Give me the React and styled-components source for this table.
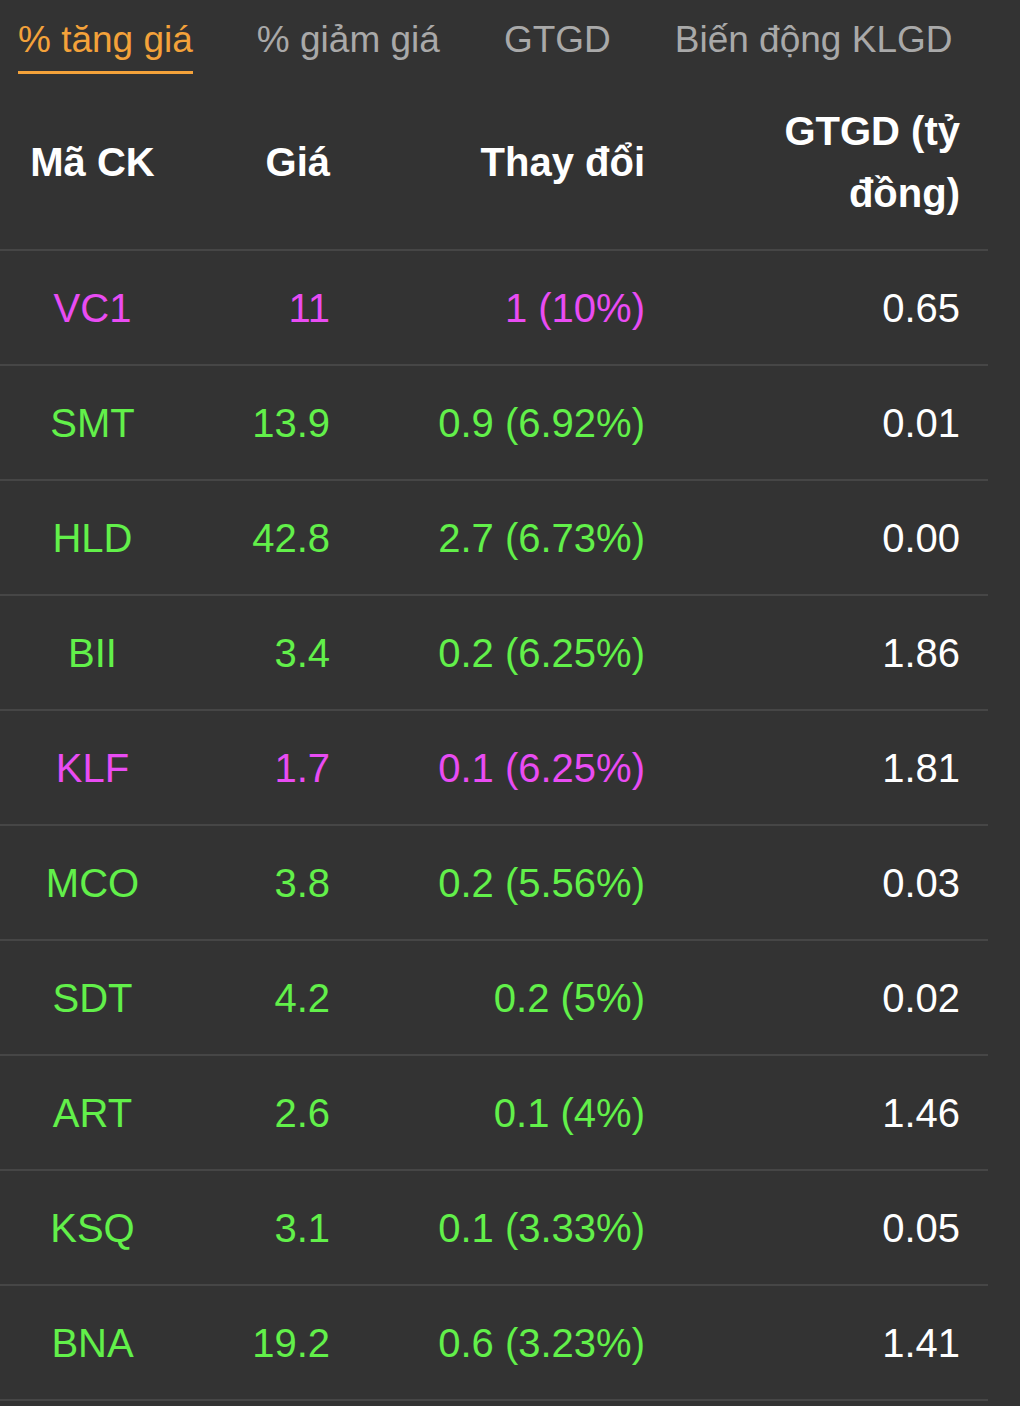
import React, { useState } from "react";
import styled, { createGlobalStyle } from "styled-components";

const GlobalStyle = createGlobalStyle`
  html, body {
    margin: 0;
    padding: 0;
    background: #333333;
  }
  body {
    font-family: "Liberation Sans", Arial, Helvetica, sans-serif;
    -webkit-font-smoothing: antialiased;
  }
`;

const Wrapper = styled.div`
  width: 1020px;
  min-height: 1406px;
  background: #333333;
  overflow: hidden;
`;

const TabBar = styled.div`
  display: flex;
  gap: 64px;
  padding-left: 18px;
  height: 74px;
`;

const Tab = styled.div`
  font-size: 37px;
  line-height: 44px;
  padding-top: 18px;
  padding-bottom: 9px;
  color: ${(p) => (p.active ? "#f4a23a" : "#a9a9a9")};
  border-bottom: 3px solid ${(p) => (p.active ? "#f4a23a" : "transparent")};
  white-space: nowrap;
  cursor: pointer;
`;

const Table = styled.div`
  width: 988px;
`;

const Row = styled.div`
  display: grid;
  grid-template-columns: 185px 173px 315px 315px;
  height: ${(p) => (p.head ? "175px" : "113px")};
  border-bottom: 2px solid #464646;
  align-items: center;
`;

const Cell = styled.div`
  text-align: ${(p) => (p.center ? "center" : "right")};
  padding-right: ${(p) => (p.center ? "0" : "28px")};
  font-size: 40px;
  line-height: ${(p) => (p.head ? "62px" : "46px")};
  font-weight: ${(p) => (p.head ? 700 : 400)};
  color: ${(p) => p.color || "#ffffff"};
  white-space: ${(p) => (p.head ? "normal" : "nowrap")};
`;

const Wrap = styled.span`
  display: inline-block;
  max-width: 210px;
`;

const UP = "#62f04a";
const CEIL = "#e94cf3";

const rows = [
  { code: "VC1", price: "11", change: "1 (10%)", value: "0.65", color: CEIL },
  { code: "SMT", price: "13.9", change: "0.9 (6.92%)", value: "0.01", color: UP },
  { code: "HLD", price: "42.8", change: "2.7 (6.73%)", value: "0.00", color: UP },
  { code: "BII", price: "3.4", change: "0.2 (6.25%)", value: "1.86", color: UP },
  { code: "KLF", price: "1.7", change: "0.1 (6.25%)", value: "1.81", color: CEIL },
  { code: "MCO", price: "3.8", change: "0.2 (5.56%)", value: "0.03", color: UP },
  { code: "SDT", price: "4.2", change: "0.2 (5%)", value: "0.02", color: UP },
  { code: "ART", price: "2.6", change: "0.1 (4%)", value: "1.46", color: UP },
  { code: "KSQ", price: "3.1", change: "0.1 (3.33%)", value: "0.05", color: UP },
  { code: "BNA", price: "19.2", change: "0.6 (3.23%)", value: "1.41", color: UP },
];

const tabs = ["% tăng giá", "% giảm giá", "GTGD", "Biến động KLGD"];

export default function App() {
  const [active, setActive] = useState(0);

  return (
    <Wrapper>
      <GlobalStyle />
      <TabBar>
        {tabs.map((t, i) => (
          <Tab key={t} active={i === active} onClick={() => setActive(i)}>
            {t}
          </Tab>
        ))}
      </TabBar>
      <Table>
        <Row head>
          <Cell head center>Mã CK</Cell>
          <Cell head>Giá</Cell>
          <Cell head>Thay đổi</Cell>
          <Cell head>
            <Wrap>GTGD (tỷ đồng)</Wrap>
          </Cell>
        </Row>
        {rows.map((r) => (
          <Row key={r.code}>
            <Cell center color={r.color}>{r.code}</Cell>
            <Cell color={r.color}>{r.price}</Cell>
            <Cell color={r.color}>{r.change}</Cell>
            <Cell>{r.value}</Cell>
          </Row>
        ))}
      </Table>
    </Wrapper>
  );
}
